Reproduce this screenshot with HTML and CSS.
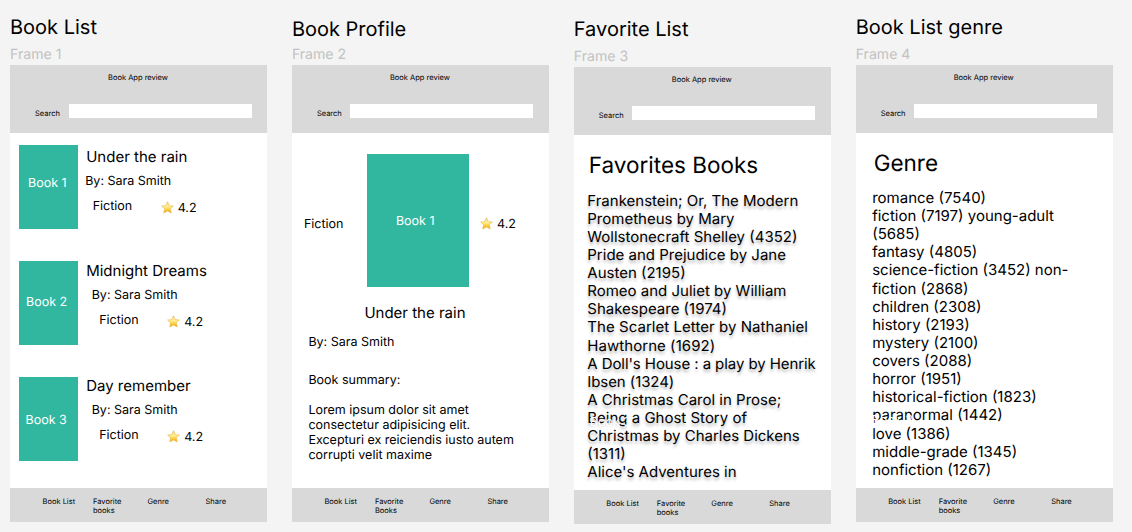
FILE: index.html
```html
<!DOCTYPE html>
<html lang="en">
<head>
<meta charset="utf-8">
<title>Book App wireframes</title>
<link rel="stylesheet" href="styles.css">
</head>
<body>
<svg class="defs" width="0" height="0" aria-hidden="true">
  <defs>
    <linearGradient id="gold" x1="0" y1="0" x2="0" y2="1">
      <stop offset="0" stop-color="#f7d774"/>
      <stop offset=".4" stop-color="#fff1a0"/>
      <stop offset=".65" stop-color="#fcd444"/>
      <stop offset="1" stop-color="#f0a010"/>
    </linearGradient>
    <symbol id="star" viewBox="0 0 26 26">
      <path d="M13 1.5 16.4 9.3 24.8 10 18.6 15.7 20.5 24 13 19.8 5.5 24 7.4 15.7 1.2 10 9.6 9.3Z" fill="url(#gold)" stroke="#e9b84c" stroke-width="1.3" stroke-linejoin="round"/>
    </symbol>
  </defs>
</svg>
<main class="canvas">
  <section class="column">
    <h1 class="title">Book List</h1>
    <p class="label">Frame 1</p>
    <div class="frame">
      <header class="bar"><p class="app">Book App review</p><div class="search"><span class="search-text">Search</span><span class="field"></span></div></header>
      <div class="body books">
        <article class="book first">
          <div class="cover"><span>Book 1</span></div>
          <div class="info"><h2 class="name">Under the rain</h2><p class="author">By: Sara Smith</p>
            <div class="meta"><span class="kind">Fiction</span><span class="rating"><svg class="star"><use href="#star"/></svg>4.2</span></div></div>
        </article>
        <article class="book second">
          <div class="cover"><span>Book 2</span></div>
          <div class="info"><h2 class="name">Midnight Dreams</h2><p class="author">By: Sara Smith</p>
            <div class="meta"><span class="kind">Fiction</span><span class="rating"><svg class="star"><use href="#star"/></svg>4.2</span></div></div>
        </article>
        <article class="book third">
          <div class="cover"><span>Book 3</span></div>
          <div class="info"><h2 class="name">Day remember</h2><p class="author">By: Sara Smith</p>
            <div class="meta"><span class="kind">Fiction</span><span class="rating"><svg class="star"><use href="#star"/></svg>4.2</span></div></div>
        </article>
      </div>
      <footer class="nav"><span>Book List</span><span>Favorite<br>books</span><span>Genre</span><span>Share</span></footer>
    </div>
  </section>

  <section class="column">
    <h1 class="title low">Book Profile</h1>
    <p class="label">Frame 2</p>
    <div class="frame">
      <header class="bar"><p class="app">Book App review</p><div class="search"><span class="search-text">Search</span><span class="field"></span></div></header>
      <div class="body profile">
        <div class="hero">
          <span class="kind">Fiction</span>
          <div class="cover large"><span>Book 1</span></div>
          <span class="rating"><svg class="star"><use href="#star"/></svg>4.2</span>
        </div>
        <h2 class="name">Under the rain</h2>
        <p class="author">By: Sara Smith</p>
        <p class="summary-head">Book summary:</p>
        <p class="summary">Lorem ipsum dolor sit amet<br>consectetur adipisicing elit.<br>Excepturi ex reiciendis iusto autem<br>corrupti velit maxime</p>
      </div>
      <footer class="nav"><span>Book List</span><span>Favorite<br>Books</span><span>Genre</span><span>Share</span></footer>
    </div>
  </section>

  <section class="column">
    <h1 class="title low">Favorite List</h1>
    <p class="label">Frame 3</p>
    <div class="frame">
      <header class="bar"><p class="app">Book App review</p><div class="search"><span class="search-text">Search</span><span class="field"></span></div></header>
      <div class="body favorites">
        <h2 class="heading">Favorites Books</h2>
        <ul class="list shadow">
          <li>Frankenstein; Or, The Modern<br>Prometheus by Mary<br>Wollstonecraft Shelley (4352)</li>
          <li>Pride and Prejudice by Jane<br>Austen (2195)</li>
          <li>Romeo and Juliet by William<br>Shakespeare (1974)</li>
          <li class="loose">The Scarlet Letter by Nathaniel<br>Hawthorne (1692)</li>
          <li class="tight">A Doll's House : a play by Henrik<br>Ibsen (1324)</li>
          <li>A Christmas Carol in Prose;<br>Being a Ghost Story of<br>Christmas by Charles Dickens<br>(1311)</li>
          <li>Alice's Adventures in</li>
        </ul>
        <span class="ghost">Book 3</span>
      </div>
      <footer class="nav"><span>Book List</span><span>Favorite<br>books</span><span>Genre</span><span>Share</span></footer>
    </div>
  </section>

  <section class="column">
    <h1 class="title">Book List genre</h1>
    <p class="label">Frame 4</p>
    <div class="frame">
      <header class="bar"><p class="app">Book App review</p><div class="search"><span class="search-text">Search</span><span class="field"></span></div></header>
      <div class="body genres">
        <h2 class="heading">Genre</h2>
        <ul class="list">
          <li>romance (7540)</li>
          <li>fiction (7197) young-adult<br>(5685)</li>
          <li>fantasy (4805)</li>
          <li>science-fiction (3452) non-<br>fiction (2868)</li>
          <li>children (2308)</li>
          <li>history (2193)</li>
          <li>mystery (2100)</li>
          <li>covers (2088)</li>
          <li>horror (1951)</li>
          <li>historical-fiction (1823)</li>
          <li>paranormal (1442)</li>
          <li>love (1386)</li>
          <li>middle-grade (1345)</li>
          <li>nonfiction (1267)</li>
        </ul>
        <span class="ghost">Book 3</span>
      </div>
      <footer class="nav"><span>Book List</span><span>Favorite<br>books</span><span>Genre</span><span>Share</span></footer>
    </div>
  </section>
</main>
</body>
</html>
```
FILE: styles.css
```css
* { box-sizing: border-box; }
body {
  margin: 0;
  height: 532px;
  overflow: hidden;
  background: #f4f4f4;
  color: #000;
  font-family: Inter, "Liberation Sans", sans-serif;
  font-size: 12.5px;
  line-height: 15px;
  white-space: nowrap;
  text-rendering: geometricPrecision;
}
h1, h2, p, ul { margin: 0; padding: 0; font-weight: 400; list-style: none; }
.defs { display: block; height: 0; }

.canvas { display: flex; gap: 24.9px; padding: 0 10px; }
.column { width: 257px; flex: none; }
.title { padding-top: 15px; height: 46px; font-size: 20px; line-height: 24px; }
.title.low { padding-top: 17px; }
.label { height: 19px; padding-top: 1px; font-size: 14.1px; line-height: 16px; color: #c2c2c2; }
.column:nth-child(3) .title { height: 48px; }

.frame { height: 457px; display: flex; flex-direction: column; background: #fff; }
.bar { flex: none; height: 67.5px; padding-top: 8px; background: #d9d9d9; font-size: 7.5px; line-height: 9px; }
.app { padding-right: 1px; text-align: center; }
.search { display: flex; gap: 8.5px; padding: 22px 0 0 25px; }
.search-text { width: 25px; padding-top: 5px; }
.field { width: 183px; height: 14px; background: #fff; }
.body { position: relative; flex: 1; min-height: 0; }
.nav {
  flex: none;
  height: 34px;
  padding: 9px 0 0 32.5px;
  display: grid;
  grid-template-columns: 50.5px 54.5px 58px 1fr;
  background: #d9d9d9;
  font-size: 7.5px;
  line-height: 9.2px;
}

.books { padding: 12.5px 0 0 9px; }
.book { height: 116px; display: flex; gap: 8.5px; }
.cover { width: 58.7px; height: 84px; padding: 31px 0 0 9px; background: #31b79f; color: #fff; }
.second .cover { padding: 34px 0 0 7px; }
.third .cover { padding: 36px 0 0 6.5px; }
.name { font-size: 15px; line-height: 18px; }
.author { margin: 8px 0 0 5.5px; }
.meta { display: flex; margin: 10px 0 0 13px; }
.kind { width: 68px; }
.rating { display: flex; gap: 4px; padding-top: 2px; }
.star { width: 13px; height: 13px; }
.first .name { padding-top: 3px; }
.first .author { margin: 7.5px 0 0 -1px; }
.first .meta { margin-left: 6.5px; }
.second .name { padding-top: 1px; }

.profile { padding: 21.5px 0 0 12px; }
.hero { display: flex; height: 133px; }
.hero .kind { width: 63px; padding-top: 63px; }
.hero .rating { padding: 63px 0 0 11.5px; }
.cover.large { width: 101.7px; height: 132.7px; padding: 59.5px 0 0 29px; }
.profile .name { margin: 17px 0 0 60.5px; }
.profile .author { margin: 13px 0 0 4.5px; }
.summary-head { margin: 23px 0 0 4.5px; }
.summary { margin: 15px 0 0 4.5px; }

.heading { font-size: 22.5px; line-height: 28px; }
.favorites { padding: 17px 0 0 13.5px; }
.favorites .heading { padding-left: 1.5px; }
.genres { padding: 17px 0 0 16.5px; }
.genres .heading { padding-left: 1.5px; }
.list { margin-top: 12px; font-size: 15px; line-height: 18.13px; }
.genres .list { margin-top: 11.4px; }
.loose { letter-spacing: .05px; }
.tight { letter-spacing: -.08px; }
.shadow { text-shadow: 0 3px 3px rgba(0, 0, 0, .28); }
.ghost { position: absolute; left: 16px; top: 280px; color: #fff; }
```
